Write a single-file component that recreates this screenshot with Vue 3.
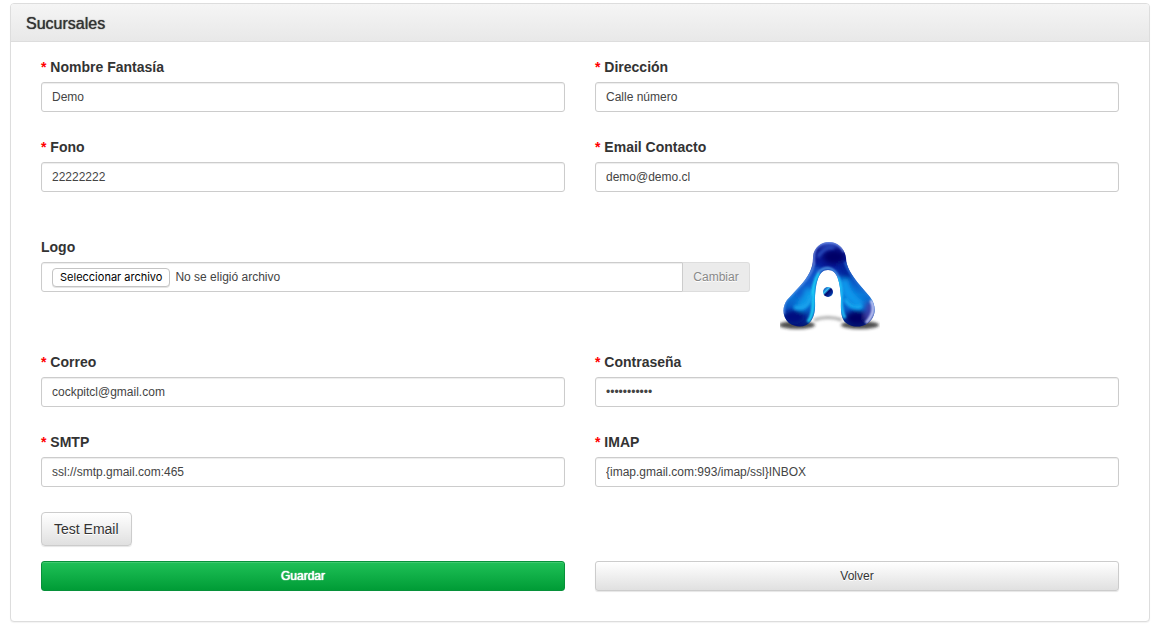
<template>
  <section class="panel">
    <header class="panel-heading">
      <h1 class="panel-title">Sucursales</h1>
    </header>
    <form class="panel-body" @submit.prevent>
      <div class="row">
        <div v-for="field in general" :key="field.id" class="form-group">
          <label :for="field.id"><span class="required">*</span> {{ field.label }}</label>
          <input :id="field.id" v-model="form[field.id]" class="form-control" :type="field.type" />
        </div>
      </div>

      <div class="row logo-row">
        <div class="form-group logo-field">
          <label for="logo">Logo</label>
          <div class="input-group">
            <label class="form-control file-control" for="logo">
              <span class="file-button">Seleccionar archivo</span>
              <span class="file-name">{{ fileName }}</span>
              <input id="logo" class="file-input" type="file" @change="onFile" />
            </label>
            <button class="addon" type="button" disabled>Cambiar</button>
          </div>
        </div>
        <svg class="logo" viewBox="0 0 100 100" role="img" aria-label="Logo">
          <defs>
            <linearGradient id="body" x1="0" y1="0" x2="0" y2="1">
              <stop offset="0" stop-color="#3a58c8" />
              <stop offset="0.1" stop-color="#0c1a90" />
              <stop offset="0.28" stop-color="#061a98" />
              <stop offset="0.42" stop-color="#0a4cc0" />
              <stop offset="0.62" stop-color="#0a78d8" />
              <stop offset="0.8" stop-color="#0758c4" />
              <stop offset="1" stop-color="#021470" />
            </linearGradient>
            <linearGradient id="dot" x1="0" y1="0" x2="1" y2="1">
              <stop offset="0.1" stop-color="#0538b0" />
              <stop offset="0.35" stop-color="#38c0f4" />
              <stop offset="0.5" stop-color="#020a70" />
              <stop offset="0.75" stop-color="#0530a0" />
              <stop offset="1" stop-color="#20b0f0" />
            </linearGradient>
            <clipPath id="shape">
              <path :d="shape" />
            </clipPath>
            <filter id="thin" x="-20%" y="-20%" width="140%" height="140%">
              <feGaussianBlur stdDeviation="0.8" />
            </filter>
            <filter id="soft" x="-30%" y="-60%" width="160%" height="220%">
              <feGaussianBlur stdDeviation="1.6" />
            </filter>
            <filter id="softer" x="-50%" y="-50%" width="200%" height="200%">
              <feGaussianBlur stdDeviation="2.4" />
            </filter>
          </defs>
          <g filter="url(#soft)">
            <ellipse cx="17" cy="88" rx="18" ry="4" fill="#222" opacity="0.8" />
            <ellipse cx="80" cy="88" rx="19" ry="4" fill="#222" opacity="0.8" />
            <path d="M34 83Q48 78 62 83" fill="none" stroke="#888" stroke-width="3" opacity="0.7" />
          </g>
          <path :d="shape" fill="url(#body)" />
          <g clip-path="url(#shape)">
            <g filter="url(#softer)">
              <ellipse cx="54" cy="20" rx="11" ry="7" fill="#000068" />
              <path d="M60 27L69 42" fill="none" stroke="#04209a" stroke-width="8" />
              <path d="M38 30Q30 50 16 60" fill="none" stroke="#0a58cc" stroke-width="7" />
              <path d="M30 52Q27 66 18 70" fill="none" stroke="#0a98e8" stroke-width="9" />
              <path d="M64 42Q66 60 82 68" fill="none" stroke="#0898ec" stroke-width="9" />
              <ellipse cx="14" cy="80" rx="11" ry="7" fill="#020c80" />
              <ellipse cx="77" cy="81" rx="11" ry="7" fill="#000064" />
              <path d="M89 66Q92 74 86 82" fill="none" stroke="#4340a8" stroke-width="7" />
            </g>
            <g filter="url(#thin)" fill="none">
              <path d="M34 28Q31 5 49 5Q60 5 64 15" stroke="#7ea0f0" stroke-width="2" />
              <path d="M34 27Q31 38 22 47L7 62Q2 69 4 77" stroke="#6c9cec" stroke-width="2" />
              <path d="M65 25Q68 34 77 45L90 60" stroke="#2a74d4" stroke-width="2" />
              <path d="M91 63Q97 75 86 86" stroke="#c8ccf8" stroke-width="3" />
              <path d="M39 36Q32 47 33 62Q34 77 28 85" stroke="#24d8fa" stroke-width="3" />
              <path d="M58 40Q62 50 61 62Q61 74 65 81" stroke="#20c4fa" stroke-width="3" />
              <path d="M38 36Q42 31 48 31Q55 32 58 40" stroke="#58a8f0" stroke-width="2" />
            </g>
            <g filter="url(#soft)" fill="none">
              <path d="M31 58Q28 74 14 70" stroke="#18a4ee" stroke-width="4" />
              <path d="M65 62Q71 73 82 69" stroke="#12a8f0" stroke-width="4" />
              <path d="M38 20Q44 9 54 11" stroke="#2c50c0" stroke-width="3" />
            </g>
          </g>
          <circle cx="48" cy="55" r="5" fill="url(#dot)" />
        </svg>
      </div>

      <div class="row">
        <div v-for="field in mail" :key="field.id" class="form-group">
          <label :for="field.id"><span class="required">*</span> {{ field.label }}</label>
          <input :id="field.id" v-model="form[field.id]" class="form-control" :type="field.type" />
        </div>
      </div>

      <button class="btn btn-test" type="button">Test Email</button>

      <div class="row actions">
        <button class="btn btn-success" type="submit">Guardar</button>
        <button class="btn" type="button">Volver</button>
      </div>
    </form>
  </section>
</template>

<script setup>
import { reactive, ref } from "vue";

const general = [
  { id: "nombre", label: "Nombre Fantasía", type: "text" },
  { id: "direccion", label: "Dirección", type: "text" },
  { id: "fono", label: "Fono", type: "text" },
  { id: "email", label: "Email Contacto", type: "email" },
];

const mail = [
  { id: "correo", label: "Correo", type: "email" },
  { id: "clave", label: "Contraseña", type: "password" },
  { id: "smtp", label: "SMTP", type: "text" },
  { id: "imap", label: "IMAP", type: "text" },
];

const form = reactive({
  nombre: "Demo",
  direccion: "Calle número",
  fono: "22222222",
  email: "demo@demo.cl",
  correo: "cockpitcl@gmail.com",
  clave: "demodemo123",
  smtp: "ssl://smtp.gmail.com:465",
  imap: "{imap.gmail.com:993/imap/ssl}INBOX",
});

const fileName = ref("No se eligió archivo");

const shape =
  "M49 5C58 5 65 12 66 21C66 30 72 38 78 46L90 60C97 69 96 80 88 86C80 92 69 90 64 84C60 78 61 69 61 61C60 46 58 33 48 33C38 33 36 46 35 61C35 69 36 77 31 84C26 91 16 91 9 86C2 80 2 70 7 63L20 49C28 40 33 32 33 21C33 12 40 5 49 5Z";

function onFile(e) {
  const file = e.target.files[0];
  fileName.value = file ? file.name : "No se eligió archivo";
}
</script>

<style>
body {
  margin: 0;
  background: #fff;
}
</style>

<style scoped>
.panel {
  margin: 3px 12px 5px 10px;
  border: 1px solid #ddd;
  border-radius: 4px;
  box-shadow: 0 1px 1px rgba(0, 0, 0, 0.05);
  background: #fff;
  color: #333;
  font-family: "Helvetica Neue", Helvetica, "Liberation Sans", Arial, sans-serif;
  font-size: 14px;
  line-height: 20px;
}

.panel-heading {
  padding: 10px 15px 7px;
  border-bottom: 1px solid #ddd;
  border-radius: 3px 3px 0 0;
  background: linear-gradient(#f5f5f5, #e8e8e8);
}

.panel-title {
  margin: 0;
  font-size: 16px;
  font-weight: 400;
  line-height: 20px;
  text-shadow: 0 0 1px #333;
}

.panel-body {
  padding: 15px 30px 30px;
}

.row {
  display: grid;
  grid-template-columns: repeat(2, minmax(0, 1fr));
  gap: 25px 30px;
}

.form-group > label {
  display: block;
  margin-bottom: 5px;
  font-weight: 700;
}

.required {
  color: #f00;
}

.form-control {
  box-sizing: border-box;
  display: block;
  width: 100%;
  height: 30px;
  padding: 5px 10px;
  border: 1px solid #ccc;
  border-radius: 3px;
  background: #fff;
  box-shadow: inset 0 1px 1px rgba(0, 0, 0, 0.075);
  color: #444;
  font-family: inherit;
  font-size: 12px;
  line-height: 18px;
}

.logo-row {
  grid-template-columns: repeat(12, minmax(0, 1fr));
  margin: 45px 0 15px;
}

.logo-field {
  grid-column: span 8;
}

.input-group {
  display: flex;
}

.file-control {
  display: flex;
  flex: 1;
  align-items: center;
  gap: 5px;
  position: relative;
  border-radius: 3px 0 0 3px;
}

.file-button {
  padding: 0 7px;
  border: 1px solid #c4c4c4;
  border-radius: 4px;
  background: #fff;
  box-shadow: 0 1px 0 rgba(0, 0, 0, 0.1);
  color: #000;
  font-family: Inter, sans-serif;
  font-size: 11px;
  line-height: 17px;
}

.file-input {
  position: absolute;
  inset: 0;
  opacity: 0;
}

.addon {
  padding: 5px 10px;
  border: 1px solid #ddd;
  border-left: 0;
  border-radius: 0 3px 3px 0;
  background: #ebebeb;
  color: #888;
  font-family: inherit;
  font-size: 12px;
  line-height: 18px;
  text-shadow: 0 1px 0 #fff;
}

.logo {
  display: block;
  grid-column: span 4;
  width: 100px;
  height: 100px;
}

.btn {
  padding: 5px 10px;
  border: 1px solid #ccc;
  border-radius: 3px;
  background: linear-gradient(#fff, #e0e0e0);
  box-shadow: 0 1px 1px rgba(0, 0, 0, 0.1);
  color: #333;
  font-family: inherit;
  font-size: 12px;
  line-height: 18px;
  text-shadow: 0 1px 0 #fff;
  cursor: pointer;
}

.btn-test {
  display: block;
  margin-top: 25px;
  padding: 6px 12px;
  border-radius: 4px;
  font-size: 14px;
  line-height: 20px;
}

.btn-success {
  border-color: #07913a;
  background: linear-gradient(#1fc157, #009c36);
  box-shadow: inset 0 1px 0 rgba(255, 255, 255, 0.15);
  color: #fff;
  text-shadow: 0 0 1px #fff, 0 0 1px #fff;
}

.actions {
  margin-top: 15px;
}
</style>
